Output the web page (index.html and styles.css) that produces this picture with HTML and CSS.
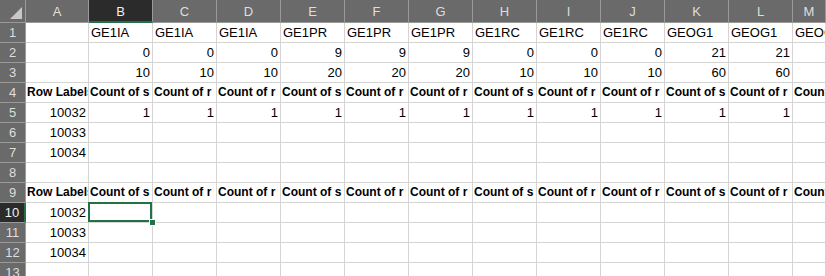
FILE: index.html
```html
<!DOCTYPE html>
<html>
<head>
<meta charset="utf-8">
<link rel="stylesheet" href="styles.css">
</head>
<body>
<div class="sheet">
  <div class="ch corner"><span class="tri"></span></div>
  <div class="ch">A</div><div class="ch sel-col">B</div><div class="ch">C</div><div class="ch">D</div><div class="ch">E</div><div class="ch">F</div><div class="ch">G</div><div class="ch">H</div><div class="ch">I</div><div class="ch">J</div><div class="ch">K</div><div class="ch">L</div><div class="ch">M</div>

  <div class="rh">1</div>
  <div class="c"></div><div class="c">GE1IA</div><div class="c">GE1IA</div><div class="c">GE1IA</div><div class="c">GE1PR</div><div class="c">GE1PR</div><div class="c">GE1PR</div><div class="c">GE1RC</div><div class="c">GE1RC</div><div class="c">GE1RC</div><div class="c">GEOG1</div><div class="c">GEOG1</div><div class="c">GEOG1</div>

  <div class="rh">2</div>
  <div class="c"></div><div class="c n">0</div><div class="c n">0</div><div class="c n">0</div><div class="c n">9</div><div class="c n">9</div><div class="c n">9</div><div class="c n">0</div><div class="c n">0</div><div class="c n">0</div><div class="c n">21</div><div class="c n">21</div><div class="c"></div>

  <div class="rh">3</div>
  <div class="c"></div><div class="c n">10</div><div class="c n">10</div><div class="c n">10</div><div class="c n">20</div><div class="c n">20</div><div class="c n">20</div><div class="c n">10</div><div class="c n">10</div><div class="c n">10</div><div class="c n">60</div><div class="c n">60</div><div class="c"></div>

  <div class="rh">4</div>
  <div class="c b">Row Labels</div><div class="c b">Count of s</div><div class="c b">Count of r</div><div class="c b">Count of r</div><div class="c b">Count of s</div><div class="c b">Count of r</div><div class="c b">Count of r</div><div class="c b">Count of s</div><div class="c b">Count of r</div><div class="c b">Count of r</div><div class="c b">Count of s</div><div class="c b">Count of r</div><div class="c b">Count of s</div>

  <div class="rh">5</div>
  <div class="c n">10032</div><div class="c n">1</div><div class="c n">1</div><div class="c n">1</div><div class="c n">1</div><div class="c n">1</div><div class="c n">1</div><div class="c n">1</div><div class="c n">1</div><div class="c n">1</div><div class="c n">1</div><div class="c n">1</div><div class="c"></div>

  <div class="rh">6</div>
  <div class="c n">10033</div><div class="c"></div><div class="c"></div><div class="c"></div><div class="c"></div><div class="c"></div><div class="c"></div><div class="c"></div><div class="c"></div><div class="c"></div><div class="c"></div><div class="c"></div><div class="c"></div>

  <div class="rh">7</div>
  <div class="c n">10034</div><div class="c"></div><div class="c"></div><div class="c"></div><div class="c"></div><div class="c"></div><div class="c"></div><div class="c"></div><div class="c"></div><div class="c"></div><div class="c"></div><div class="c"></div><div class="c"></div>

  <div class="rh">8</div>
  <div class="c"></div><div class="c"></div><div class="c"></div><div class="c"></div><div class="c"></div><div class="c"></div><div class="c"></div><div class="c"></div><div class="c"></div><div class="c"></div><div class="c"></div><div class="c"></div><div class="c"></div>

  <div class="rh">9</div>
  <div class="c b">Row Labels</div><div class="c b">Count of s</div><div class="c b">Count of r</div><div class="c b">Count of r</div><div class="c b">Count of s</div><div class="c b">Count of r</div><div class="c b">Count of r</div><div class="c b">Count of s</div><div class="c b">Count of r</div><div class="c b">Count of r</div><div class="c b">Count of s</div><div class="c b">Count of r</div><div class="c b">Count of s</div>

  <div class="rh sel-row">10</div>
  <div class="c n">10032</div><div class="c active"></div><div class="c"></div><div class="c"></div><div class="c"></div><div class="c"></div><div class="c"></div><div class="c"></div><div class="c"></div><div class="c"></div><div class="c"></div><div class="c"></div><div class="c"></div>

  <div class="rh">11</div>
  <div class="c n">10033</div><div class="c"></div><div class="c"></div><div class="c"></div><div class="c"></div><div class="c"></div><div class="c"></div><div class="c"></div><div class="c"></div><div class="c"></div><div class="c"></div><div class="c"></div><div class="c"></div>

  <div class="rh">12</div>
  <div class="c n">10034</div><div class="c"></div><div class="c"></div><div class="c"></div><div class="c"></div><div class="c"></div><div class="c"></div><div class="c"></div><div class="c"></div><div class="c"></div><div class="c"></div><div class="c"></div><div class="c"></div>

  <div class="rh">13</div>
  <div class="c"></div><div class="c"></div><div class="c"></div><div class="c"></div><div class="c"></div><div class="c"></div><div class="c"></div><div class="c"></div><div class="c"></div><div class="c"></div><div class="c"></div><div class="c"></div><div class="c"></div>
</div>
</body>
</html>
```

FILE: styles.css
```css
html, body {
  margin: 0;
  padding: 0;
  background: #ffffff;
  overflow: hidden;
}

.sheet {
  display: grid;
  grid-template-columns: 26px 63px repeat(11, 64px) 33px;
  grid-template-rows: 23px repeat(13, 20px);
  width: 826px;
  height: 276px;
  overflow: hidden;
  font-family: "Liberation Sans", Arial, sans-serif;
  font-size: 13px;
  color: #000;
}

.ch {
  box-sizing: border-box;
  background: #6a6a6a;
  color: #dedede;
  border-right: 1px solid #9a9a9a;
  border-bottom: 1px solid #9a9a9a;
  display: flex;
  align-items: center;
  justify-content: center;
  font-size: 13px;
  padding-top: 1px;
}

.corner {
  align-items: flex-end;
  justify-content: flex-end;
  padding: 0 3px 3px 0;
}

.tri {
  width: 0;
  height: 0;
  border-left: 12px solid transparent;
  border-bottom: 12px solid #c8c8c8;
}

.sel-col {
  background: #2b2b2b;
  color: #f0f0f0;
  border-bottom: 2px solid #217346;
}

.rh {
  box-sizing: border-box;
  background: #6a6a6a;
  color: #dedede;
  border-right: 1px solid #9a9a9a;
  border-bottom: 1px solid #9a9a9a;
  display: flex;
  align-items: center;
  justify-content: center;
  font-size: 13px;
}

.sel-row {
  background: #2b2b2b;
  color: #f0f0f0;
  border-right: 2px solid #217346;
}

.c {
  box-sizing: border-box;
  border-right: 1px solid #d4d4d4;
  border-bottom: 1px solid #d4d4d4;
  white-space: nowrap;
  overflow: hidden;
  text-overflow: clip;
  padding: 0 2px;
  line-height: 19px;
  text-align: left;
}

.n {
  text-align: right;
}

.b {
  font-weight: bold;
  font-size: 12px;
  padding: 0 1px;
}

.active {
  position: relative;
  overflow: visible;
}

.active::after {
  content: "";
  position: absolute;
  left: -1px;
  top: -1px;
  width: 64px;
  height: 20px;
  border: 2px solid #217346;
  box-sizing: border-box;
  z-index: 2;
}

.active::before {
  content: "";
  position: absolute;
  right: -4px;
  bottom: -4px;
  width: 5px;
  height: 5px;
  background: #217346;
  border: 1px solid #ffffff;
  z-index: 3;
}
```
